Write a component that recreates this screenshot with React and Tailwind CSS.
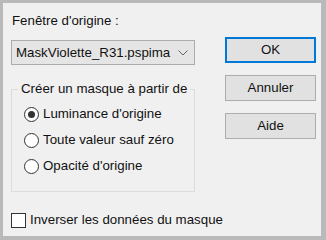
import { useState } from 'react'

const Radio = ({ label, checked, onClick }) => (
  <div className="flex items-center h-[26px] cursor-default" onClick={onClick}>
    <div className="w-[15px] h-[15px] rounded-full border border-[#333] bg-white flex items-center justify-center shrink-0">
      {checked && <div className="w-[7px] h-[7px] rounded-full bg-[#333]" />}
    </div>
    <span className="ml-[4px] whitespace-nowrap">{label}</span>
  </div>
)

const Btn = ({ children, primary }) => (
  <button
    className={
      'w-[91px] h-[26px] bg-[#e1e1e1] flex items-center justify-center ' +
      (primary ? 'border-2 border-[#0078d7]' : 'border border-[#adadad]')
    }
  >
    {children}
  </button>
)

export default function App() {
  const [mode, setMode] = useState(0)
  const [invert, setInvert] = useState(false)

  const modes = ["Luminance d'origine", 'Toute valeur sauf zéro', "Opacité d'origine"]

  return (
    <div className="w-[326px] h-[240px] bg-[#b9b9b9] pt-[3px] pl-[3px] pr-[5px] pb-[4px]">
      <div
        className="w-full h-full bg-[#f0f0f0] flex text-[13.3px] text-[#111] leading-[16px]"
        style={{ fontFamily: '"Liberation Sans", Arial, sans-serif' }}
      >
        <div className="pl-[8px] pt-[10px] w-[192px] flex flex-col">
          <div className="ml-[1px] whitespace-nowrap">Fenêtre d'origine :</div>
          <div className="mt-[11px] h-[25px] bg-[#e5e5e5] border border-[#acacac] flex items-center pl-[4px] pr-[6px]">
            <span className="flex-1 overflow-hidden whitespace-nowrap">MaskViolette_R31.pspima</span>
            <svg width="10" height="6" viewBox="0 0 10 6" className="ml-[4px] shrink-0">
              <path d="M0.5 0.5 L5 5 L9.5 0.5" fill="none" stroke="#666" strokeWidth="1" />
            </svg>
          </div>
          <fieldset className="mt-[16px] h-[111px] min-w-0 border border-[#dcdcdc] pl-[12px] pt-[4px]">
            <legend className="-ml-[6px] px-[3px] whitespace-nowrap">Créer un masque à partir de</legend>
            {modes.map((m, i) => (
              <Radio key={i} label={m} checked={mode === i} onClick={() => setMode(i)} />
            ))}
          </fieldset>
          <div className="mt-[20px] flex items-center" onClick={() => setInvert(!invert)}>
            <div className="w-[15px] h-[15px] border border-[#333] bg-white flex items-center justify-center shrink-0">
              {invert && <span className="text-[11px]">✓</span>}
            </div>
            <span className="ml-[4px] whitespace-nowrap">Inverser les données du masque</span>
          </div>
        </div>
        <div className="ml-[30px] pt-[34px] flex flex-col gap-[12px]">
          <Btn primary>OK</Btn>
          <Btn>Annuler</Btn>
          <Btn>Aide</Btn>
        </div>
      </div>
    </div>
  )
}
